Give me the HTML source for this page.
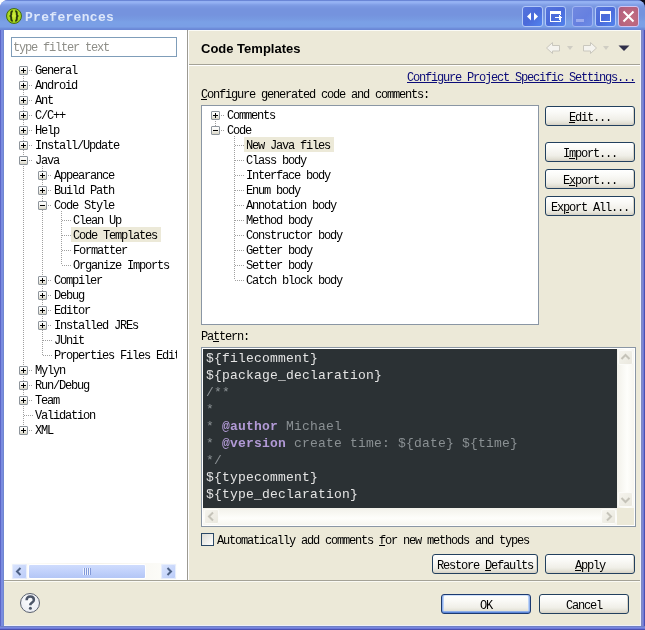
<!DOCTYPE html>
<html><head><meta charset="utf-8">
<style>
*{box-sizing:border-box;margin:0;padding:0}
html,body{width:645px;height:630px;overflow:hidden;background:#fff}
body{position:relative;font-family:"Liberation Mono",monospace;font-size:12px;color:#000}
.a{position:absolute}
.t,.btn,.code,.g{will-change:transform}
.t{position:absolute;white-space:pre;font-family:"Liberation Mono",monospace;font-size:12px;letter-spacing:-1.2px;line-height:15px;height:15px}
#corner{left:637px;top:0;width:8px;height:8px;background:#0a0a1a}
#win{left:0;top:0;width:645px;height:630px;border-radius:8px 8px 0 0;background:linear-gradient(#7080c4 0,#7080c4 1px,#7888e0 1px,#7888e0 2px,#6c78d8 2px,#6c78d8 3px,#4a50b0 3px) 0 626px/645px 4px no-repeat,linear-gradient(90deg,#5c66c8 0,#5c66c8 1px,#7a8ce0 1px,#7a8ce0 3px,#7088d0 3px,#7088d0 4px,#7b8ee2 4px,#7b8ee2 641px,#7f88b8 641px,#7f8ad0 642px,#7f8ad0 643px,#7078d8 643px,#7078d8 644px,#4a50b0 644px)}
#title{left:0;top:0;width:645px;height:30px;border-radius:8px 8px 0 0;background:linear-gradient(#6a86d6 0,#6a86d6 1px,#94b1f2 1px,#94b1f2 3px,#86a4ea 4px,#7b99e2 6px,#7593de 9px,#7593de 15px,#7799e1 19px,#7aa0e6 22px,#7a9fe6 27px,#7090dc 28px,#6884d4 30px)}
#client{left:4px;top:30px;width:637px;height:596px;background:#ece9d8;box-shadow:inset -1px -1px 0 #eef0fa}
#left{left:4px;top:30px;width:183px;height:550px;background:#fff}
.exp{position:absolute;width:9px;height:9px;border:1px solid #8e959c;border-radius:1px;background:linear-gradient(#fff 0,#f6f6f2 45%,#d8d5c6 100%)}
.exp:before{content:"";position:absolute;left:1px;top:3px;width:5px;height:1px;background:#000}
.exp.p:after{content:"";position:absolute;left:3px;top:1px;width:1px;height:5px;background:#000}
.dv{position:absolute;width:1px;background-image:linear-gradient(#a0a0a0 50%,transparent 50%);background-size:1px 2px}
.dh{position:absolute;height:1px;background-image:linear-gradient(90deg,#a0a0a0 50%,transparent 50%);background-size:2px 1px}
.btn{position:absolute;height:20px;border:1px solid #22405e;border-radius:3px;background:linear-gradient(#fff 0,#fafaf7 30%,#f0efe8 70%,#e3e1d6 88%,#d6d0c5 100%);box-shadow:inset -1px -1px 0 #d8d4c8;text-align:center;font-family:"Liberation Mono",monospace;font-size:12px;letter-spacing:-1.2px;line-height:20px;padding-top:1px;white-space:pre}
u{text-decoration:underline;text-decoration-thickness:1px;text-underline-offset:1px}
.wb{position:absolute;top:6px;width:21px;height:21px;border:1px solid #b2c8f8;border-radius:3px;background:linear-gradient(135deg,#5574dc 0,#4a6ada 50%,#5284ee 100%)}
.sbtn{position:absolute;width:15px;height:15px;border-radius:2px;background:linear-gradient(135deg,#f6f5ef,#e9e7dd);box-shadow:inset 0 0 0 1px #fbfbf8}
.code{position:absolute;left:206px;white-space:pre;font-family:"Liberation Mono",monospace;font-size:13px;letter-spacing:0.2px;line-height:17px;height:17px;color:#e4e4e4}
.cm{color:#8a9093}
.tag{color:#b29ad6;font-weight:bold}
</style></head><body>
<div id="corner" class="a"></div>
<div id="win" class="a"></div>
<div id="title" class="a"></div>
<!-- app icon -->
<div class="a" style="left:6px;top:8px;width:16px;height:16px;border-radius:50%;border:1px solid #44700c;background:radial-gradient(circle at 50% 45%,#d4f040 0,#b0dc20 50%,#8cbc18 90%)"></div>
<svg class="a" style="left:6px;top:8px" width="16" height="16" viewBox="0 0 16 16"><path d="M6.8 3.2 C5.2 3.2 5.2 4 5.2 5.5 V6.8 C5.2 7.6 4.8 8 3.6 8 C4.8 8 5.2 8.4 5.2 9.2 V10.5 C5.2 12 5.2 12.8 6.8 12.8 M9.2 3.2 C10.8 3.2 10.8 4 10.8 5.5 V6.8 C10.8 7.6 11.2 8 12.4 8 C11.2 8 10.8 8.4 10.8 9.2 V10.5 C10.8 12 10.8 12.8 9.2 12.8" fill="none" stroke="#2a3a0c" stroke-width="1.9"/></svg>
<div class="t" style="left:25px;top:9px;font-weight:bold;font-size:13px;letter-spacing:0.3px;color:#dde7fb;height:18px;line-height:18px">Preferences</div>

<!-- window buttons -->
<div class="wb" style="left:522px"><svg class="a" style="left:0;top:0" width="19" height="19" viewBox="0 0 19 19"><path d="M4 9.5 L8 5.5 L8 13.5 Z M11 5.5 L15 9.5 L11 13.5 Z" fill="#fff"/></svg></div>
<div class="wb" style="left:545px"><svg class="a" style="left:0;top:0" width="19" height="19" viewBox="0 0 19 19" shape-rendering="crispEdges" fill="#fff"><rect x="4" y="4" width="11" height="3"/><rect x="4" y="4" width="1" height="11"/><rect x="4" y="14" width="11" height="1"/><rect x="14" y="4" width="1" height="4"/><rect x="14" y="12" width="1" height="3"/><rect x="9" y="10" width="6" height="1"/><rect x="13" y="8" width="1" height="5"/><rect x="14" y="9" width="1" height="3"/><rect x="15" y="10" width="1" height="1"/></svg></div>
<div class="wb" style="left:572px;border-color:#9fb4f2;background:linear-gradient(135deg,#7088e0,#6680e0 60%,#6c8ce6)"><div class="a" style="left:3px;top:12px;width:8px;height:3px;background:#9aaaee"></div></div>
<div class="wb" style="left:595px"><svg class="a" style="left:0;top:0" width="19" height="19" viewBox="0 0 19 19" shape-rendering="crispEdges" fill="#fff"><rect x="4" y="4" width="11" height="3"/><rect x="4" y="4" width="1" height="11"/><rect x="4" y="14" width="11" height="1"/><rect x="14" y="4" width="1" height="11"/></svg></div>
<div class="wb" style="left:618px;border-color:#d2c4f2;background:radial-gradient(circle at 60% 60%,#c46e82 0,#b8647e 60%,#a85c80 100%)"><svg class="a" style="left:0;top:0" width="19" height="19" viewBox="0 0 19 19"><path d="M4.5 4.5 L14.5 14.5 M14.5 4.5 L4.5 14.5" stroke="#fff" stroke-width="2"/></svg></div>

<div id="client" class="a"></div>
<div id="left" class="a"></div>
<div class="a" style="left:187px;top:30px;width:1px;height:550px;background:#9c9a92"></div>
<div class="a" style="left:188px;top:30px;width:1px;height:550px;background:#fff"></div>
<div class="a" style="left:188px;top:30px;width:452px;height:1px;background:#fbfbf6"></div>
<div class="a" style="left:4px;top:580px;width:636px;height:1px;background:#a4a296"></div>
<div class="a" style="left:4px;top:581px;width:636px;height:1px;background:#fafaf4"></div>

<!-- filter box -->
<div class="a" style="left:11px;top:37px;width:166px;height:20px;border:1px solid #7f9db9;background:#fff"></div>
<div class="t" style="left:13px;top:41px;color:#8e8e88">type filter text</div>

<div id="tree">
<div class="dv" style="left:23px;top:70px;height:360px"></div>
<div class="dv" style="left:42px;top:166px;height:189px"></div>
<div class="dv" style="left:61px;top:211px;height:54px"></div>
<div class="dh" style="left:29px;top:70px;width:4px"></div>
<div class="exp p" style="left:19px;top:66px"></div>
<div class="t" style="left:35px;top:64px">General</div>
<div class="dh" style="left:29px;top:85px;width:4px"></div>
<div class="exp p" style="left:19px;top:81px"></div>
<div class="t" style="left:35px;top:79px">Android</div>
<div class="dh" style="left:29px;top:100px;width:4px"></div>
<div class="exp p" style="left:19px;top:96px"></div>
<div class="t" style="left:35px;top:94px">Ant</div>
<div class="dh" style="left:29px;top:115px;width:4px"></div>
<div class="exp p" style="left:19px;top:111px"></div>
<div class="t" style="left:35px;top:109px">C/C++</div>
<div class="dh" style="left:29px;top:130px;width:4px"></div>
<div class="exp p" style="left:19px;top:126px"></div>
<div class="t" style="left:35px;top:124px">Help</div>
<div class="dh" style="left:29px;top:145px;width:4px"></div>
<div class="exp p" style="left:19px;top:141px"></div>
<div class="t" style="left:35px;top:139px">Install/Update</div>
<div class="dh" style="left:29px;top:160px;width:4px"></div>
<div class="exp m" style="left:19px;top:156px"></div>
<div class="t" style="left:35px;top:154px">Java</div>
<div class="dh" style="left:48px;top:175px;width:4px"></div>
<div class="exp p" style="left:38px;top:171px"></div>
<div class="t" style="left:54px;top:169px">Appearance</div>
<div class="dh" style="left:48px;top:190px;width:4px"></div>
<div class="exp p" style="left:38px;top:186px"></div>
<div class="t" style="left:54px;top:184px">Build Path</div>
<div class="dh" style="left:48px;top:205px;width:4px"></div>
<div class="exp m" style="left:38px;top:201px"></div>
<div class="t" style="left:54px;top:199px">Code Style</div>
<div class="dh" style="left:62px;top:220px;width:9px"></div>
<div class="t" style="left:73px;top:214px">Clean Up</div>
<div class="dh" style="left:62px;top:235px;width:9px"></div>
<div class="a" style="left:71px;top:227px;width:90px;height:15px;background:#ece9d8"></div>
<div class="t" style="left:73px;top:229px">Code Templates</div>
<div class="dh" style="left:62px;top:250px;width:9px"></div>
<div class="t" style="left:73px;top:244px">Formatter</div>
<div class="dh" style="left:62px;top:265px;width:9px"></div>
<div class="t" style="left:73px;top:259px">Organize Imports</div>
<div class="dh" style="left:48px;top:280px;width:4px"></div>
<div class="exp p" style="left:38px;top:276px"></div>
<div class="t" style="left:54px;top:274px">Compiler</div>
<div class="dh" style="left:48px;top:295px;width:4px"></div>
<div class="exp p" style="left:38px;top:291px"></div>
<div class="t" style="left:54px;top:289px">Debug</div>
<div class="dh" style="left:48px;top:310px;width:4px"></div>
<div class="exp p" style="left:38px;top:306px"></div>
<div class="t" style="left:54px;top:304px">Editor</div>
<div class="dh" style="left:48px;top:325px;width:4px"></div>
<div class="exp p" style="left:38px;top:321px"></div>
<div class="t" style="left:54px;top:319px">Installed JREs</div>
<div class="dh" style="left:43px;top:340px;width:9px"></div>
<div class="t" style="left:54px;top:334px">JUnit</div>
<div class="dh" style="left:43px;top:355px;width:9px"></div>
<div class="t" style="left:54px;top:349px">Properties Files Edi<span style="display:inline-block;width:3px;overflow:hidden;vertical-align:top">t</span></div>
<div class="dh" style="left:29px;top:370px;width:4px"></div>
<div class="exp p" style="left:19px;top:366px"></div>
<div class="t" style="left:35px;top:364px">Mylyn</div>
<div class="dh" style="left:29px;top:385px;width:4px"></div>
<div class="exp p" style="left:19px;top:381px"></div>
<div class="t" style="left:35px;top:379px">Run/Debug</div>
<div class="dh" style="left:29px;top:400px;width:4px"></div>
<div class="exp p" style="left:19px;top:396px"></div>
<div class="t" style="left:35px;top:394px">Team</div>
<div class="dh" style="left:24px;top:415px;width:9px"></div>
<div class="t" style="left:35px;top:409px">Validation</div>
<div class="dh" style="left:29px;top:430px;width:4px"></div>
<div class="exp p" style="left:19px;top:426px"></div>
<div class="t" style="left:35px;top:424px">XML</div>

</div>

<!-- left h-scrollbar -->
<div class="a" style="left:11px;top:563px;width:166px;height:17px;background:linear-gradient(90deg,#fefefb,#f3f1ea 50%,#fefefb)"></div>
<div class="a" style="left:12px;top:564px;width:15px;height:15px;border-radius:2px;background:linear-gradient(135deg,#dbe5fd,#b9cbf9);box-shadow:inset 0 0 0 1px #e8eefc"></div>
<svg class="a" style="left:12px;top:564px" width="15" height="15" viewBox="0 0 15 15"><path d="M8.5 4 L5 7.5 L8.5 11" fill="none" stroke="#4d6185" stroke-width="2"/></svg>
<div class="a" style="left:28px;top:564px;width:118px;height:15px;border-radius:2px;border:1px solid #fff;background:linear-gradient(#cfdcfd,#c1d1fb 50%,#b3c6f6)"></div>
<svg class="a" style="left:82px;top:567px" width="10" height="9"><path d="M1.5 1V8M3.5 1V8M5.5 1V8M7.5 1V8" stroke="#eef3fe" stroke-width="1"/><path d="M2.5 1V8M4.5 1V8M6.5 1V8M8.5 1V8" stroke="#8198d8" stroke-width="1"/></svg>
<div class="a" style="left:161px;top:564px;width:15px;height:15px;border-radius:2px;background:linear-gradient(135deg,#dbe5fd,#b9cbf9);box-shadow:inset 0 0 0 1px #e8eefc"></div>
<svg class="a" style="left:161px;top:564px" width="15" height="15" viewBox="0 0 15 15"><path d="M6.5 4 L10 7.5 L6.5 11" fill="none" stroke="#4d6185" stroke-width="2"/></svg>

<!-- help -->
<div class="a" style="left:20px;top:593px;width:20px;height:20px;border-radius:50%;border:1.5px solid #5a6170;background:radial-gradient(circle at 45% 40%,#fbfcfe,#e4e7ee)"></div>
<svg class="a" style="left:20px;top:593px" width="20" height="20" viewBox="0 0 20 20"><path d="M6.6 7.2 C6.6 4.8 8.2 3.6 10.2 3.6 C12.4 3.6 13.9 4.9 13.9 6.9 C13.9 9 11.2 9.4 10.4 11.2 V12.2" fill="none" stroke="#4c5668" stroke-width="2.5"/><circle cx="10.4" cy="15.2" r="1.5" fill="#4c5668"/></svg>

<!-- right header -->
<div class="a g" style="left:201px;top:41px;font:bold 13px 'Liberation Sans';white-space:pre;line-height:16px">Code Templates</div>
<!-- nav arrows -->
<svg class="a" style="left:545px;top:41px" width="90" height="16" viewBox="0 0 90 16">
<path d="M1.5 7 L7.5 1.5 V4.5 H14.5 V10 H7.5 V12.5 Z" fill="#f4f3ee" stroke="#c9c7bd" stroke-width="1" stroke-linejoin="round"/>
<path d="M22 5 H28 L25 9 Z" fill="#cfcdc3"/>
<path d="M51.5 7 L45.5 1.5 V4.5 H38.5 V10 H45.5 V12.5 Z" fill="#f4f3ee" stroke="#c9c7bd" stroke-width="1" stroke-linejoin="round"/>
<path d="M58 5 H64 L61 9 Z" fill="#cfcdc3"/>
<path d="M73.5 4.5 H84.5 L79 10 Z" fill="#30304a"/>
</svg>
<div class="a" style="left:189px;top:64px;width:451px;height:1px;background:#a4a296"></div>
<div class="a" style="left:189px;top:65px;width:451px;height:1px;background:#fff"></div>

<div class="t" style="left:407px;top:71px;color:#0c0c78"><span style="text-decoration:underline;text-decoration-thickness:1px;text-underline-offset:1px">Configure Project Specific Settings...</span></div>
<div class="t" style="left:201px;top:88px"><u>C</u>onfigure generated code and comments:</div>

<!-- templates tree -->
<div class="a" style="left:201px;top:105px;width:338px;height:220px;border:1px solid #8a96a4;background:#fff"></div>
<div class="dv" style="left:215px;top:121px;height:5px"></div>
<div class="dv" style="left:234px;top:136px;height:144px"></div>
<div class="dh" style="left:221px;top:115px;width:4px"></div>
<div class="exp p" style="left:211px;top:111px"></div>
<div class="t" style="left:227px;top:109px">Comments</div>
<div class="dh" style="left:221px;top:130px;width:4px"></div>
<div class="exp m" style="left:211px;top:126px"></div>
<div class="t" style="left:227px;top:124px">Code</div>
<div class="dh" style="left:235px;top:145px;width:9px"></div>
<div class="a" style="left:244px;top:137px;width:90px;height:15px;background:#ece9d8"></div>
<div class="t" style="left:246px;top:139px">New Java files</div>
<div class="dh" style="left:235px;top:160px;width:9px"></div>
<div class="t" style="left:246px;top:154px">Class body</div>
<div class="dh" style="left:235px;top:175px;width:9px"></div>
<div class="t" style="left:246px;top:169px">Interface body</div>
<div class="dh" style="left:235px;top:190px;width:9px"></div>
<div class="t" style="left:246px;top:184px">Enum body</div>
<div class="dh" style="left:235px;top:205px;width:9px"></div>
<div class="t" style="left:246px;top:199px">Annotation body</div>
<div class="dh" style="left:235px;top:220px;width:9px"></div>
<div class="t" style="left:246px;top:214px">Method body</div>
<div class="dh" style="left:235px;top:235px;width:9px"></div>
<div class="t" style="left:246px;top:229px">Constructor body</div>
<div class="dh" style="left:235px;top:250px;width:9px"></div>
<div class="t" style="left:246px;top:244px">Getter body</div>
<div class="dh" style="left:235px;top:265px;width:9px"></div>
<div class="t" style="left:246px;top:259px">Setter body</div>
<div class="dh" style="left:235px;top:280px;width:9px"></div>
<div class="t" style="left:246px;top:274px">Catch block body</div>


<div class="btn" style="left:545px;top:106px;width:90px"><u>E</u>dit...</div>
<div class="btn" style="left:545px;top:142px;width:90px">I<u>m</u>port...</div>
<div class="btn" style="left:545px;top:169px;width:90px">E<u>x</u>port...</div>
<div class="btn" style="left:545px;top:196px;width:90px">Ex<u>p</u>ort All...</div>

<div class="t" style="left:201px;top:330px">Pa<u>t</u>tern:</div>
<!-- editor -->
<div class="a" style="left:201px;top:347px;width:435px;height:180px;border:1px solid #8a96a4;background:#fff"></div>
<div class="a" style="left:203px;top:349px;width:414px;height:159px;background:#2b3134"></div>
<div class="a" style="left:617px;top:349px;width:17px;height:159px;background:linear-gradient(90deg,#f2f1ea,#fefefb 60%,#f7f6f0)"></div>
<div class="a" style="left:203px;top:508px;width:414px;height:17px;background:linear-gradient(#f2f1ea,#fefefb 60%,#f7f6f0)"></div>
<div class="a" style="left:617px;top:508px;width:17px;height:17px;background:#ece9d8"></div>
<div class="sbtn" style="left:618px;top:350px"><svg width="15" height="15" viewBox="0 0 15 15"><path d="M3.5 9 L7.5 5 L11.5 9" fill="none" stroke="#c5c3b9" stroke-width="2"/></svg></div>
<div class="sbtn" style="left:618px;top:492px"><svg width="15" height="15" viewBox="0 0 15 15"><path d="M3.5 6 L7.5 10 L11.5 6" fill="none" stroke="#c5c3b9" stroke-width="2"/></svg></div>
<div class="sbtn" style="left:204px;top:509px"><svg width="15" height="15" viewBox="0 0 15 15"><path d="M9 3.5 L5 7.5 L9 11.5" fill="none" stroke="#c5c3b9" stroke-width="2"/></svg></div>
<div class="sbtn" style="left:601px;top:509px"><svg width="15" height="15" viewBox="0 0 15 15"><path d="M6 3.5 L10 7.5 L6 11.5" fill="none" stroke="#c5c3b9" stroke-width="2"/></svg></div>

<div class="code" style="top:350px">${filecomment}</div>
<div class="code" style="top:367px">${package_declaration}</div>
<div class="code cm" style="top:384px">/**</div>
<div class="code cm" style="top:401px">*</div>
<div class="code cm" style="top:418px">* <span class="tag">@author</span> Michael</div>
<div class="code cm" style="top:435px">* <span class="tag">@version</span> create time: ${date} ${time}</div>
<div class="code cm" style="top:452px">*/</div>
<div class="code" style="top:469px">${typecomment}</div>
<div class="code" style="top:486px">${type_declaration}</div>

<div class="a" style="left:201px;top:533px;width:13px;height:13px;border:1px solid #2a4866;background:linear-gradient(135deg,#dcdcd5,#fff)"></div>
<div class="t" style="left:217px;top:534px">Automatically add comments <u>f</u>or new methods and types</div>

<div class="btn" style="left:432px;top:554px;width:106px">Restore <u>D</u>efaults</div>
<div class="btn" style="left:545px;top:554px;width:90px"><u>A</u>pply</div>

<div class="btn" style="left:441px;top:594px;width:90px;border-color:#1c3a70;box-shadow:inset 0 -1px 0 #5c86d8,inset 0 -2px 0 #8fb0ea,inset 1px 0 0 #8fb0ec,inset -1px 0 0 #8fb0ec,inset 2px 0 0 #bcd2f6,inset -2px 0 0 #bcd2f6,inset 0 1px 0 #cfe0fa">OK</div>
<div class="btn" style="left:539px;top:594px;width:90px">Cancel</div>
</body></html>
